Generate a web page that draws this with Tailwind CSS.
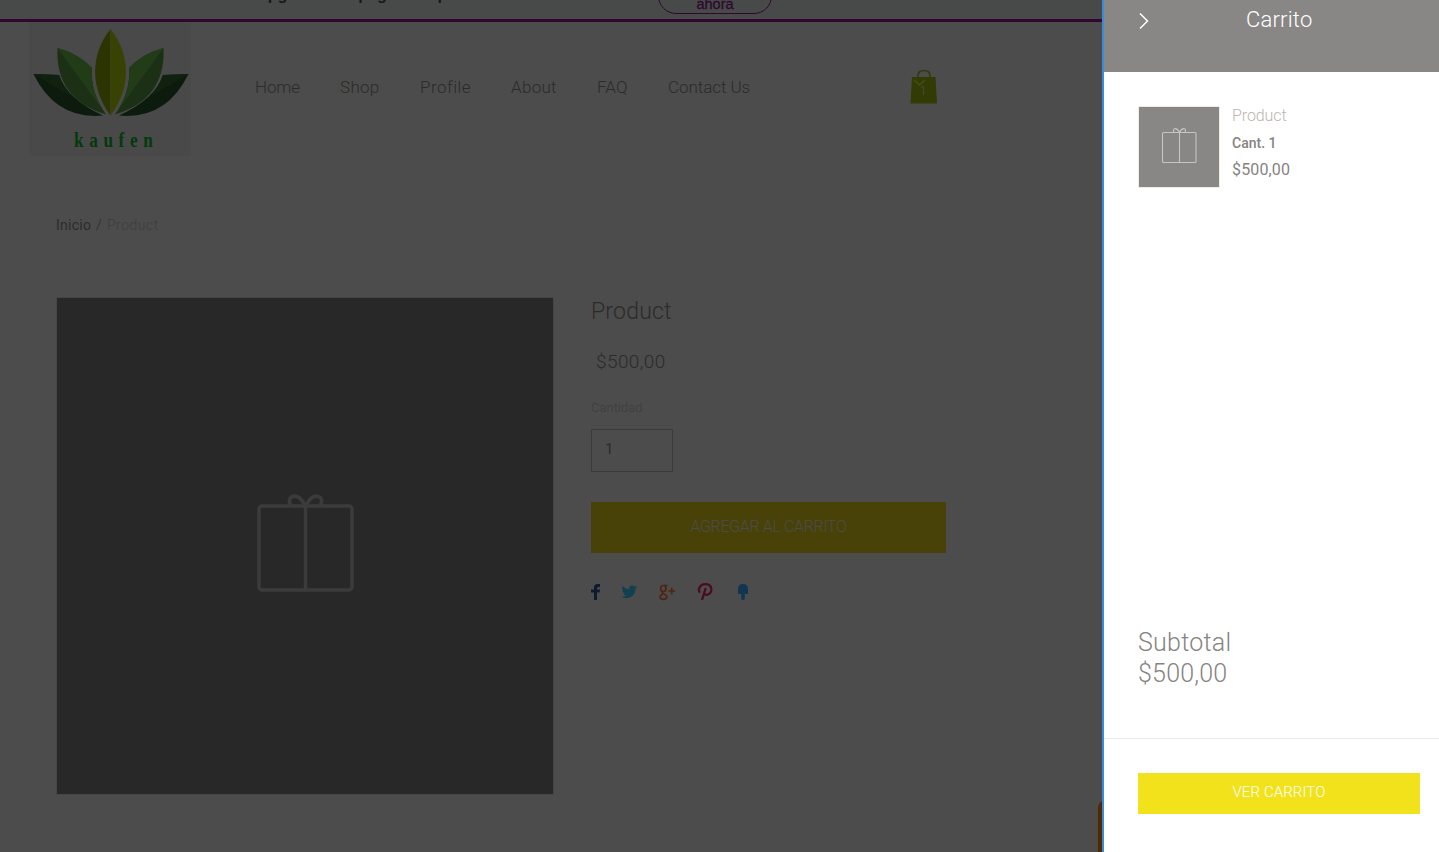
<!DOCTYPE html>
<html lang="es">
<head>
<meta charset="utf-8">
<title>Carrito</title>
<script src="https://cdn.jsdelivr.net/npm/@tailwindcss/browser@4"></script>
</head>
<body class="relative w-[1439px] h-[852px] overflow-hidden bg-[#4c4c4c] font-['Roboto',sans-serif] font-light text-[#2b2b2b]">
<div class="flex h-[22px] items-start border-b-3 border-[#300730] bg-[#474a48] pl-[225px] overflow-hidden font-['Liberation_Sans',sans-serif]">
  <p class="-mt-[15px] w-[433px] shrink-0 whitespace-nowrap text-[16px] leading-[20px] font-bold text-[#161818]">Haz upgrade a tu página de primera con tu dominio</p>
  <a class="-mt-[22px] flex h-[36px] w-[114px] shrink-0 items-end justify-center rounded-[18px] border border-[#300730] text-[14.500px] leading-[18px] font-normal text-[#300730] [-webkit-text-stroke:0.3px_#300730]">ahora</a>
</div>
<header class="flex h-[134px] pl-[29px]">
  <div class="w-[162px] bg-[#494949]">
    <svg class="block" width="162" height="134" viewBox="29 22 162 134">
      <path d="M33.500 74 59 75Q67 99 103 115.500Q56 120 33.500 74Z" fill="#0c1b0e"/>
      <path d="M33.500 74 59 75Q63 86 72 97Z" fill="#10210f"/>
      <path d="M188.500 74 163 75Q155 99 119 115.500Q166 120 188.500 74Z" fill="#0c1b0e"/>
      <path d="M188.500 74 163 75Q159 86 150 97Z" fill="#10210f"/>
      <path d="M57.500 48Q79 54 92 68Q90 92 106 114.500Q55 99 57.500 48Z" fill="#1b3015"/>
      <path d="M57.500 48Q79 54 92 68Q90 92 106 114.500Z" fill="#233c18"/>
      <path d="M163.500 48Q142 54 129 68Q131 92 115 114.500Q166 99 163.500 48Z" fill="#1b3015"/>
      <path d="M163.500 48Q142 54 129 68Q131 92 115 114.500Z" fill="#233c18"/>
      <path d="M110.500 29C90 55 90 88 110.500 115.500Z" fill="#2c3402"/>
      <path d="M110.500 29C131 55 131 88 110.500 115.500Z" fill="#384203"/>
      <g transform="translate(74 147) scale(.78 1)"><text font-family="Liberation Serif" font-weight="700" font-size="22" textLength="101" lengthAdjust="spacing" fill="#033a0b">kaufen</text></g>
    </svg>
  </div>
  <nav class="ml-[64px] mt-[54px] flex h-6 w-[655px] items-start text-[17px] leading-[22px]">
    <a class="w-[85px] -tracking-[0.1px]">Home</a><a class="w-20 tracking-[0.3px]">Shop</a><a class="w-[91px] tracking-[0.5px]">Profile</a><a class="w-[86px] tracking-[0.3px]">About</a><a class="w-[71px] tracking-[0.1px]">FAQ</a><a class="-tracking-[0.05px]">Contact Us</a>
  </nav>
  <svg class="mt-[47px]" width="28" height="35" viewBox="910 69 28 35">
    <path d="M912 77H935.500L937 103.500H910.500Z" fill="#323b03"/>
    <path d="M918 79V76Q918 70.500 924 70.500T930 76V79" fill="none" stroke="#323b03" stroke-width="1.600"/>
    <path d="M914 80 919.500 85 925 80" fill="none" stroke="#404b10" stroke-width="2"/>
    <text x="919.500" y="95" font-family="Roboto" font-weight="300" font-size="13" fill="#4c4c4c">1</text>
  </svg>
</header>
<main class="px-[56px] pt-[58px]">
  <nav class="flex h-[22px] items-center text-[14px] leading-[22px]">
    <a class="w-[40px] font-normal tracking-[0.25px]">Inicio</a><span class="w-[11px]">/</span><span class="tracking-[0.5px] text-[#3e3e3e]">Product</span>
  </nav>
  <section class="mt-[61px] flex items-start">
    <div class="flex size-[498px] items-center justify-center border border-[#454545] bg-[#282828]">
      <svg class="-mt-[6px]" width="98" height="98" viewBox="0 0 98 98" fill="none" stroke="#3b3b3b" stroke-width="3.500">
        <rect x="3" y="12" width="93" height="84" rx="3"/><path d="M49.500 12V96M36 12C32.500 9.500 32.500 5 35.500 3C41.500 0 45.500 5 49.500 12C53.500 5 57.500 0 63.500 3C66.500 5 66.500 9.500 63 12"/>
      </svg>
    </div>
    <div class="ml-[37px] w-[355px]">
      <h1 class="pt-px text-[23px] leading-7 tracking-[0.2px]">Product</h1>
      <p class="mt-[24px] pl-[5px] text-[19px] leading-6 tracking-[0.4px]">$500,00</p>
      <label class="mt-[26px] block text-[13px] leading-4 tracking-[0.05px] text-[#3c3c3c]">Cantidad</label>
      <div class="mt-[13px] flex h-[43px] w-[82px] items-center border border-[#3b3b3b] pl-[13px] pb-[3px] text-[15px] font-normal">1</div>
      <button class="mt-[30px] block h-[51px] w-full bg-[#484208] pb-px text-[16px] -tracking-[0.35px] text-[#4c4c4c]"><span class="whitespace-nowrap">AGREGAR AL CARRITO</span></button>
      <svg class="mt-[29px] block" width="160" height="20" viewBox="591 582 160 20">
        <path d="M594 600V592.500H591V589.500H594V587.500Q594 584 597.500 584H600V587H598.500Q597 587 597 588.500V589.500H600L599.600 592.500H597V600Z" fill="#111a30"/>
        <path transform="translate(621.500 584) scale(.65)" d="M23.950 4.570a10 10 0 01-2.820.770 4.960 4.960 0 002.160-2.720c-.95.550-2 .950-3.130 1.180a4.920 4.920 0 00-8.380 4.480C7.690 8.100 4.070 6.130 1.640 3.160a4.820 4.820 0 00-.67 2.480c0 1.710.870 3.210 2.190 4.100a4.900 4.900 0 01-2.230-.620v.060a4.920 4.920 0 003.950 4.830 5 5 0 01-2.210.080 4.940 4.940 0 004.600 3.420A9.870 9.870 0 010 19.540a14 14 0 007.550 2.210c9.050 0 14-7.500 14-13.980 0-.210 0-.420-.020-.630a9.940 9.940 0 002.460-2.550z" fill="#11404e"/>
        <g fill="none" stroke="#4f2412" stroke-width="1.700"><ellipse cx="663.300" cy="588.500" rx="2.700" ry="3"/><path d="M664 585.500H667.500M663 591.500Q661 593 664 594C668 595.500 667.500 599.300 663.500 599.300S659 595.500 662.500 594.500M668.500 591H675M671.700 587.800V594.200"/></g>
        <path d="M699.800 592.800C697.500 589 700 584.200 705.500 584.200C711.500 584.200 712.500 589.500 710.500 592.700C708.500 595.800 704.500 595.200 703.800 593.200M705.700 588L702 600" fill="none" stroke="#4c0a20" stroke-width="2.200"/>
        <path d="M738 594V589Q738 584 743 584T748 589V594H744.700V599Q744.700 600 743 600T741.300 599V594Z" fill="#123652"/>
      </svg>
    </div>
  </section>
</main>
<div class="absolute left-[1098px] top-[800px] h-[60px] w-8 rounded-tl-lg bg-[#4e2b03]"></div>
<aside class="absolute right-0 top-0 flex h-[852px] w-[337px] flex-col border-l-2 border-[#398bdc] bg-white text-[#868381]">
  <header class="flex h-[72px] shrink-0 items-start bg-[#898785] text-white">
    <svg class="ml-[35px] mt-[12px]" width="11" height="18" viewBox="0 0 11 18" fill="none" stroke="white" stroke-width="1.500"><path d="M1 1.500 8.500 9 1 16.500"/></svg>
    <h2 class="ml-[96px] mt-[6px] text-[22px] leading-7 tracking-[0.2px]">Carrito</h2>
  </header>
  <div class="flex flex-1 items-start pl-[34px] pt-[34px]">
    <div class="flex size-[82px] items-center justify-center border border-[#efebe5] bg-[#898785]">
      <svg class="-mt-[3px]" width="36" height="37" viewBox="0 0 36 37" fill="none" stroke="#c6c5c3" stroke-width="1.100"><rect x="1.500" y="5.500" width="33.500" height="30" rx="1"/><path d="M18.500 5.500V35.500M13.500 5.500C12 4.500 12 2.500 13.500 1.800C15.500 1 17 2.500 18.500 5.500C20 2.500 21.500 1 23.500 1.800C25 2.500 25 4.500 23.500 5.500"/></svg>
    </div>
    <div class="ml-[12px]">
      <p class="text-[16px] leading-[20px] -tracking-[0.1px] text-[#b9b5b1]">Product</p>
      <p class="mt-[8px] text-[14px] leading-[18px] font-medium tracking-[0px]">Cant. 1</p>
      <p class="mt-[8px] text-[16px] leading-5 font-normal tracking-[0.15px]">$500,00</p>
    </div>
  </div>
  <div class="h-[112px] shrink-0 border-b border-[#efeae3] pl-[34px] text-[25px] leading-[31px]">
    <p class="tracking-[0.25px]">Subtotal</p><p class="tracking-[0.2px]">$500,00</p>
  </div>
  <footer class="h-[113px] shrink-0 pl-[34px] pt-[34px]">
    <button class="block h-[41px] w-[282px] bg-[#f1e21b] pb-[3px] text-[15px] tracking-[0.1px] text-white"><span>VER CARRITO</span></button>
  </footer>
</aside>
</body>
</html>
